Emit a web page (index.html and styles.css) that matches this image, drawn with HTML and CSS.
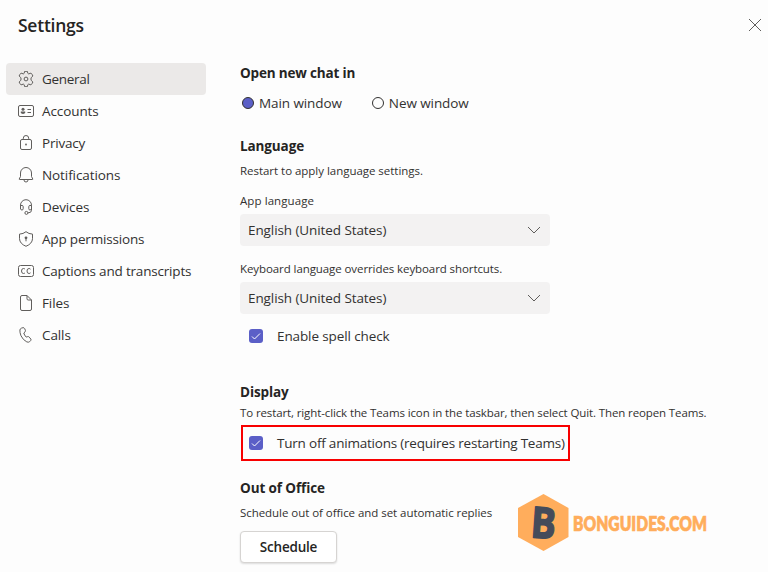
FILE: index.html
```html
<!DOCTYPE html>
<html lang="en">
<head>
<meta charset="utf-8">
<title>Settings</title>
<link rel="stylesheet" href="styles.css">
</head>
<body>
<div class="dialog">
  <header class="header">
    <h1>Settings</h1>
    <svg class="close" width="14" height="14" viewBox="0 0 14 14"><path d="M1 1l12 12M13 1L1 13"/></svg>
  </header>
  <div class="body">
    <nav class="nav">
      <a class="item active"><svg class="icon" viewBox="0 0 16 16"><path d="M6.600 .4Q8 .1 9.400 .4L9.800 2.300Q10.200 3 11 2.800L12.900 2.100Q14.300 3.400 14.900 5L13.300 6.500Q12.500 8 13.300 9.500L14.900 11Q14.300 12.600 12.900 13.900L11 13.200Q10.200 13 9.800 13.700L9.400 15.600Q8 15.900 6.600 15.600L6.200 13.700Q5.800 13 5 13.200L3.100 13.900Q1.700 12.600 1.100 11L2.700 9.500Q3.500 8 2.700 6.500L1.100 5Q1.700 3.400 3.100 2.100L5 2.800Q5.800 3 6.200 2.300Z"/><circle cx="8" cy="8" r="1.900"/></svg><span class="w-general">General</span></a>
      <a class="item"><svg class="icon" viewBox="0 0 16 16"><rect x=".5" y="2.500" width="15" height="11" rx="1.500"/><path d="M9.500 6.500h3.500M9.500 9.500h3.500"/><circle class="fill" cx="5" cy="6.200" r="1.500"/><path class="fill" d="M2.800 8.500h4.400v.8q0 1.700-2.200 1.700t-2.200-1.700z"/></svg><span class="w-accounts">Accounts</span></a>
      <a class="item"><svg class="icon" viewBox="0 0 16 16"><rect x="2.500" y="4.500" width="11" height="10" rx="1.500"/><path d="M5.300 4.500V3.200a2.700 2.700 0 0 1 5.400 0v1.300"/><circle class="fill" cx="8" cy="9.500" r=".9"/></svg><span class="w-privacy">Privacy</span></a>
      <a class="item"><svg class="icon" viewBox="0 0 16 16"><path d="M8 .5a5.500 5.500 0 0 0-5.500 5.500v3.500L1.200 12q-.2.500.5.500h12.600q.7 0 .5-.5L13.500 9.500V6A5.500 5.500 0 0 0 8 .5zM6 13a2 2 0 0 0 4 0"/></svg><span class="w-notifications">Notifications</span></a>
      <a class="item"><svg class="icon" viewBox="0 0 16 16"><path d="M2.500 10V6.200a5.500 5.500 0 0 1 11 0V10M2.500 6.500H4q1.200 0 1.200 1v2.200q0 1.300-1.200 1.300t-1.500-1V6.500M13.500 6.500H12q-1.200 0-1.200 1v2.200q0 1.300 1.200 1.300t1.500-1v1.500q0 2.200-3.500 2.400"/><circle cx="8.400" cy="13.900" r="1.500"/></svg><span class="w-devices">Devices</span></a>
      <a class="item"><svg class="icon" viewBox="0 0 16 16"><path d="M8 .7Q10.700 3 14.500 3.100V7.700Q14.300 12.700 8 15.300Q1.700 12.700 1.500 7.700V3.100Q5.300 3 8 .7Z"/><circle class="fill" cx="8" cy="6.800" r="1.400"/><path d="M8 7v3.300"/></svg><span class="w-permissions">App permissions</span></a>
      <a class="item"><svg class="icon" viewBox="0 0 16 16"><rect x=".5" y="2.500" width="15" height="11" rx="2"/><path d="M7 6.200Q6.500 5.500 5.500 5.500Q3.500 5.500 3.500 8T5.500 10.500Q6.500 10.500 7 9.800M12.500 6.200Q12 5.500 11 5.500Q9 5.500 9 8T11 10.500Q12 10.500 12.500 9.800"/></svg><span class="w-captions">Captions and transcripts</span></a>
      <a class="item"><svg class="icon" viewBox="0 0 16 16"><path d="M4 .5H9L13.500 5V14q0 1.500-1.500 1.500H4Q2.500 15.500 2.500 14V2Q2.500 .5 4 .5M9 .5V3.800Q9 5 10.200 5H13.500"/></svg><span class="w-files">Files</span></a>
      <a class="item"><svg class="icon" viewBox="0 0 16 16"><path d="M3.500 1.100L5 .7Q6.100 .5 6.600 1.500L7.400 3.300Q7.700 4.200 7 4.900L5.800 6Q6.200 8 8.200 10.100L9.800 9.600Q10.600 9.400 11.200 10.100L12.800 12Q13.400 12.900 12.600 13.700L11.600 14.700Q10.500 15.600 8.800 14.900Q5 13 3 8.800Q1.700 5.500 1.900 3Q2.200 1.600 3.500 1.100Z"/></svg><span class="w-calls">Calls</span></a>
    </nav>
    <main class="content">
      <h2 class="w-chat">Open new chat in</h2>
      <div class="radios">
        <label class="radio"><i class="dot on"></i><span class="w-main">Main window</span></label>
        <label class="radio"><i class="dot"></i><span class="w-main">New window</span></label>
      </div>
      <h2 class="language w-language">Language</h2>
      <p class="note restart w-restart">Restart to apply language settings.</p>
      <p class="note app w-app">App language</p>
      <div class="select"><span class="w-english">English (United States)</span><svg width="14" height="8" viewBox="0 0 14 8"><path d="M1 1l6 6 6-6"/></svg></div>
      <p class="note keyboard w-keyboard">Keyboard language overrides keyboard shortcuts.</p>
      <div class="select"><span class="w-english">English (United States)</span><svg width="14" height="8" viewBox="0 0 14 8"><path d="M1 1l6 6 6-6"/></svg></div>
      <label class="check spell"><svg class="box" viewBox="0 0 14 14"><path d="M3 7.500l2.500 2.500 5.500-5.500"/></svg><span class="w-spell">Enable spell check</span></label>
      <h2 class="display w-display">Display</h2>
      <p class="note quit w-quit">To restart, right-click the Teams icon in the taskbar, then select Quit. Then reopen Teams.</p>
      <label class="check highlighted"><svg class="box" viewBox="0 0 14 14"><path d="M3 7.500l2.500 2.500 5.500-5.500"/></svg><span class="w-turn">Turn off animations (requires restarting Teams)</span></label>
      <h2 class="office w-office">Out of Office</h2>
      <p class="note replies w-replies">Schedule out of office and set automatic replies</p>
      <button class="button"><span class="w-schedule">Schedule</span></button>
    </main>
  </div>
  <svg class="brand" width="230" height="70" viewBox="0 0 230 70">
    <path class="hex" d="M25.500 1L50.500 15V44L25.500 58L0 44V15Z"/>
    <text class="letter" x="13" y="45" textLength="25" lengthAdjust="spacingAndGlyphs" transform="rotate(4 25 30)">B</text>
    <text class="site" x="55" y="38" textLength="134" lengthAdjust="spacingAndGlyphs">BONGUIDES.COM</text>
  </svg>
</div>
</body>
</html>
```
FILE: styles.css
```css
* { box-sizing: border-box; }
body { margin: 0; background: #fdfdfd; color: #252423; font-family: "Open Sans", "Noto Sans", sans-serif; font-size: 13.5px; line-height: 20px; }
h1, h2, p { margin: 0; }
svg { fill: none; stroke: #605e5c; flex: none; }
span, h1, h2, p { white-space: nowrap; }
.dialog { position: relative; width: 768px; height: 572px; overflow: hidden; }
.header { display: flex; justify-content: space-between; align-items: center; height: 63px; padding: 0 6px 13px 18px; }
h1 { font-size: 17.5px; line-height: 24px; font-weight: 600; letter-spacing: -.25px; }
.body { display: flex; }
.nav { width: 200px; margin-left: 6px; }
.item { display: flex; align-items: center; gap: 8px; height: 32px; padding-left: 12px; border-radius: 4px; color: #323130; }
.active { background: #ebe9e8; }
.icon { width: 16px; height: 16px; stroke-width: 1; }
.fill { fill: #605e5c; stroke: none; }
.content { width: 500px; margin-left: 34px; display: flex; flex-direction: column; align-items: flex-start; color: #323130; }
h2 { font-size: 13.5px; line-height: 20px; font-weight: 700; color: #252423; }
.radios { display: flex; gap: 30px; margin-top: 10px; padding-left: 2px; }
.radio { display: flex; align-items: center; gap: 5px; }
.dot { width: 12px; height: 12px; border: 1px solid #323130; border-radius: 50%; }
.on { background: #5b5fc7; }
.language { margin-top: 23px; }
.note { font-size: 11.5px; line-height: 16px; color: #323130; }
.restart { margin-top: 7px; }
.app { margin: 14px 0 5px; }
.keyboard { margin: 15px 0 5px; }
.select { display: flex; align-items: center; justify-content: space-between; width: 310px; height: 32px; padding: 0 9px 0 8px; border-radius: 4px; background: #f3f2f2; }
.check { display: flex; align-items: center; gap: 14px; }
.box { width: 14px; height: 14px; border-radius: 3px; background: #5b5fc7; stroke: #fff; }
.spell { margin: 12px 0 0 9px; }
.display { margin-top: 36px; }
.quit { margin-top: 3px; }
.highlighted { width: 329px; height: 36px; margin: 4px 0 0 1px; padding-left: 6px; border: 2px solid #f80000; }
.office { margin-top: 17px; }
.replies { margin-top: 7px; }
.button { width: 97px; height: 32px; margin-top: 10px; padding: 0; border: 1px solid #d6d4d2; border-radius: 4px; background: #fff; box-shadow: 0 1px 2px #0002; color: #252423; font: 600 13.5px/20px "Open Sans", sans-serif; }
.w-general { letter-spacing: -.3px; }
.w-accounts, .w-notifications, .w-main, .w-english { letter-spacing: -.09px; }
.w-privacy { letter-spacing: -.2px; }
.w-devices, .w-files, .w-calls, .w-spell, .w-language, .w-display, .w-office { letter-spacing: -.11px; }
.w-permissions { letter-spacing: -.18px; }
.w-captions { letter-spacing: -.19px; }
.w-chat { letter-spacing: -.17px; }
.w-restart { letter-spacing: -.03px; }
.w-app { letter-spacing: .08px; }
.w-keyboard { letter-spacing: -.085px; }
.w-quit { letter-spacing: -.115px; }
.w-turn { letter-spacing: -.21px; }
.w-replies { letter-spacing: -.05px; }
.w-schedule { letter-spacing: -.2px; }
.brand { position: absolute; left: 518px; top: 493px; }
.hex { fill: #ffad5c; stroke: none; }
.letter { font: 700 43px "Open Sans", sans-serif; fill: #454b5a; stroke: #454b5a; stroke-width: 1.500; stroke-linejoin: round; }
.site { font: 800 20px Lato, sans-serif; fill: #ffad5c; stroke: #ffad5c; stroke-width: .6; }
```
